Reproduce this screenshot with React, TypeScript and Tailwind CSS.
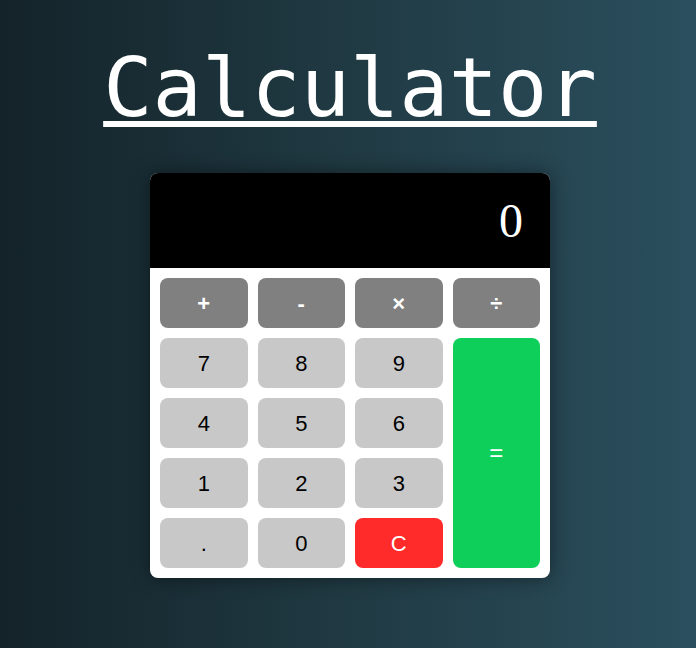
const ops = ['+', '-', '×', '÷']

const numBtn = 'h-[50px] rounded-lg bg-[#c8c8c8] text-black text-[22px]'

export default function App() {
  return (
    <div className="min-h-[648px] w-full pl-[4px] bg-gradient-to-r from-[#14232a] via-[#203a43] to-[#2b4f5e] flex flex-col items-center font-['Liberation_Sans',Arial,sans-serif]">
      <h1 className="mt-[47px] text-[82px] leading-[82px] text-white underline decoration-[6px] underline-offset-[5px] font-['DejaVu_Sans_Mono',monospace]">
        Calculator
      </h1>
      <div className="mt-[44px] w-[400px] rounded-lg bg-white overflow-hidden shadow-[0_0_20px_rgba(0,0,0,0.45)]">
        <div className="h-[95px] bg-black flex items-center justify-end pr-[27px] text-white text-[48px] font-['Liberation_Serif',serif]">
          0
        </div>
        <div className="p-[10px] grid grid-cols-4 gap-[10px]">
          {ops.map((o) => (
            <button key={o} className="h-[50px] rounded-lg bg-[#808080] text-white text-[22px] font-bold">
              {o}
            </button>
          ))}
          <button className={numBtn}>7</button>
          <button className={numBtn}>8</button>
          <button className={numBtn}>9</button>
          <button className="row-span-4 rounded-lg bg-[#0ecf5a] text-white text-[24px]">=</button>
          <button className={numBtn}>4</button>
          <button className={numBtn}>5</button>
          <button className={numBtn}>6</button>
          <button className={numBtn}>1</button>
          <button className={numBtn}>2</button>
          <button className={numBtn}>3</button>
          <button className={numBtn}>.</button>
          <button className={numBtn}>0</button>
          <button className="h-[50px] rounded-lg bg-[#ff2a2a] text-white text-[22px]">C</button>
        </div>
      </div>
    </div>
  )
}
